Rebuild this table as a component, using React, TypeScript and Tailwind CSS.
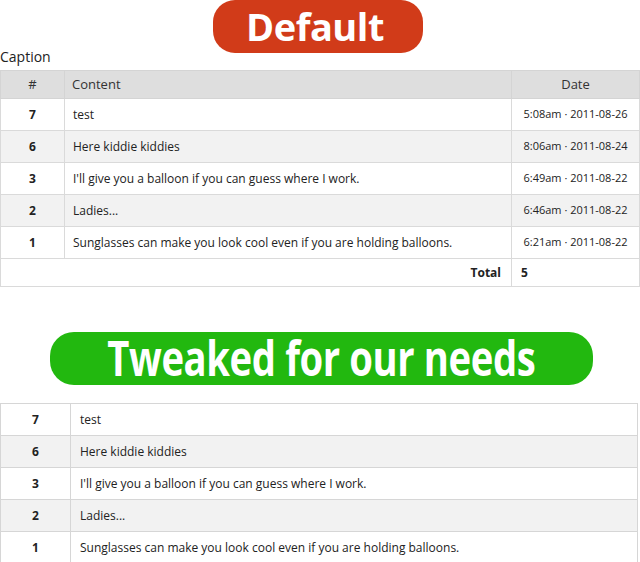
import React from "react";

const rows = [
  { id: 7, content: "test", date: "5:08am · 2011-08-26" },
  { id: 6, content: "Here kiddie kiddies", date: "8:06am · 2011-08-24" },
  { id: 3, content: "I'll give you a balloon if you can guess where I work.", date: "6:49am · 2011-08-22" },
  { id: 2, content: "Ladies...", date: "6:46am · 2011-08-22" },
  { id: 1, content: "Sunglasses can make you look cool even if you are holding balloons.", date: "6:21am · 2011-08-22" },
];

const body = "font-['Open_Sans','Liberation_Sans',sans-serif]";
const badge = "font-['Open_Sans','Liberation_Sans',sans-serif] font-bold text-white";

const App = () => {
  return (
    <div className={`w-[640px] h-[562px] bg-white text-[#222] overflow-hidden ${body}`}>
      <div className="flex justify-center">
        <div className={`w-[210px] h-[53px] mr-[4px] pr-[6px] rounded-[22px] bg-[#d13b19] flex items-center justify-center text-[38px] leading-none tracking-[-0.5px] ${badge}`}>
          <span className="-mt-[2px]">Default</span>
        </div>
      </div>

      <table className="w-[640px] border-collapse mt-[-4px] text-[12px]">
        <caption className="text-left text-[14px] leading-[15px] pb-[6px]">Caption</caption>
        <thead>
          <tr className="bg-[#dedede] h-[28px] text-[13px] text-[#333]">
            <th className="w-[64px] border border-[#d4d4d4] font-normal text-center">#</th>
            <th className="border border-[#d4d4d4] font-normal text-left pl-[7px]">Content</th>
            <th className="w-[128px] border border-[#d4d4d4] font-normal text-center">Date</th>
          </tr>
        </thead>
        <tbody>
          {rows.map((r, i) => (
            <tr key={r.id} className={`h-[32px] ${i % 2 ? "bg-[#f2f2f2]" : "bg-white"}`}>
              <td className="border border-[#dadada] text-center font-bold">{r.id}</td>
              <td className="border border-[#dadada] pl-[8px]">{r.content}</td>
              <td className="border border-[#dadada] text-center text-[11px]">{r.date}</td>
            </tr>
          ))}
        </tbody>
        <tfoot>
          <tr className="h-[28px]">
            <td colSpan={2} className="border border-[#dadada] text-right font-bold pr-[10px]">Total</td>
            <td className="border border-[#dadada] font-bold pl-[9px]">5</td>
          </tr>
        </tfoot>
      </table>

      <div className="flex justify-center mt-[45px]">
        <div className={`w-[543px] h-[53px] ml-[2px] rounded-[24px] bg-[#22b80f] flex items-center justify-center text-[49px] leading-none tracking-[-0.5px] ${badge}`}>
          <span className="-mt-[3px] scale-x-[0.78] whitespace-nowrap">Tweaked for our needs</span>
        </div>
      </div>

      <table className="w-[638px] border-collapse mt-[18px] text-[12px]">
        <tbody>
          {rows.map((r, i) => (
            <tr key={r.id} className={`h-[32px] ${i % 2 ? "bg-[#f2f2f2]" : "bg-white"}`}>
              <td className="w-[70px] border border-[#d6d6d6] text-center font-bold">{r.id}</td>
              <td className="border border-[#d6d6d6] pl-[9px]">{r.content}</td>
            </tr>
          ))}
        </tbody>
      </table>
    </div>
  );
};

export default App;
